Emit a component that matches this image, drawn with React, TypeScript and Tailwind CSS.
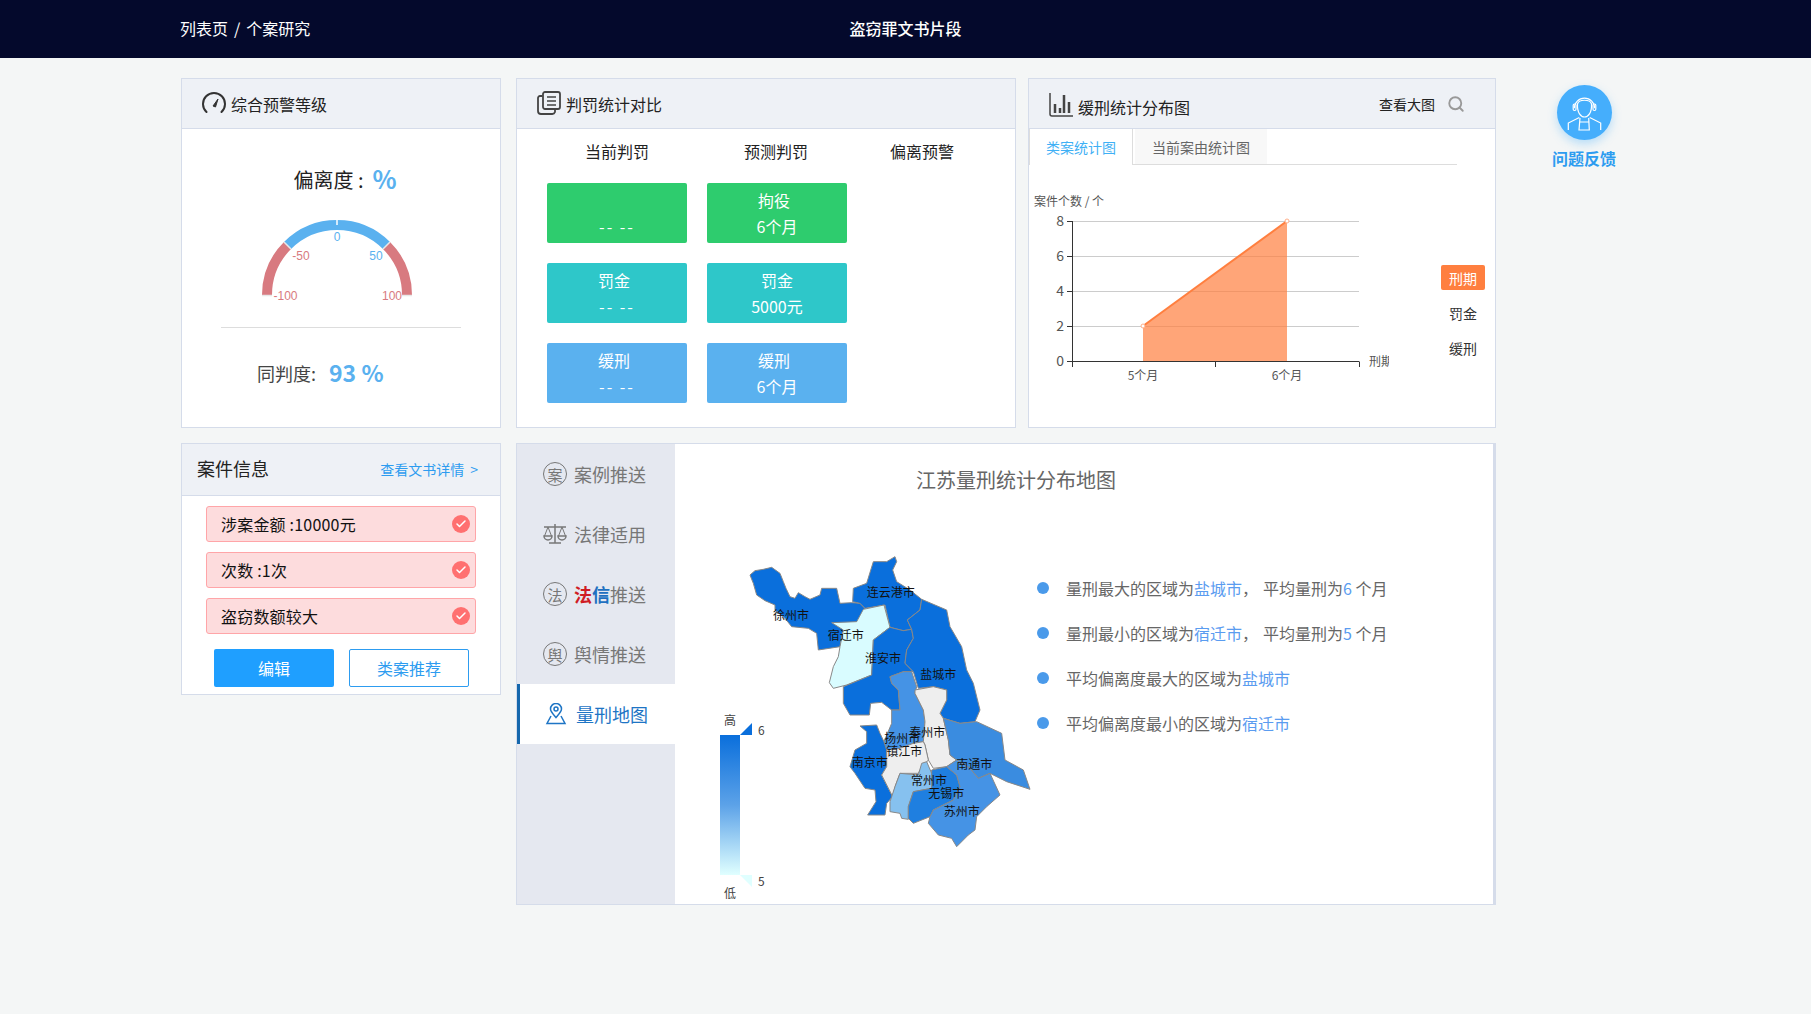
import { Check, Search } from "lucide-react";

const regions = [
  { name: "徐州市", fill: "#0a6fdc", x: 273, y: 225, points: "150,105 165,92 190,88 215,82 240,100 250,125 258,145 270,170 285,175 295,158 315,170 330,178 360,165 365,145 410,145 420,190 455,188 480,190 495,205 480,240 455,260 430,270 420,320 355,330 350,280 325,265 275,260 255,235 225,210 225,195 195,182 170,165 160,130" },
  { name: "连云港市", fill: "#0a6fdc", x: 572, y: 158, points: "458,185 460,145 500,130 520,65 560,65 585,50 590,65 578,90 590,125 630,150 665,178 660,210 622,240 635,268 610,272 570,262 555,195 495,205 480,190" },
  { name: "宿迁市", fill: "#d9fcff", x: 437, y: 285, points: "395,248 470,245 490,208 552,195 570,262 520,300 515,405 440,435 400,445 388,428 400,380 415,350 420,320 430,270" },
  { name: "淮安市", fill: "#0a6fdc", x: 549, y: 355, points: "570,262 610,272 635,268 640,295 620,330 615,370 640,395 610,395 570,410 575,430 595,450 600,510 575,510 545,487 512,490 508,525 450,525 430,490 430,440 515,405 520,300" },
  { name: "盐城市", fill: "#0a6fdc", x: 715, y: 402, points: "665,178 740,210 750,260 785,320 800,390 820,430 840,510 825,545 780,550 730,535 720,520 740,480 740,450 700,440 655,445 640,395 615,370 620,330 640,295 635,268 622,240 660,210" },
  { name: "扬州市", fill: "#4593e5", x: 607, y: 596, points: "570,410 610,395 635,395 650,440 645,460 670,510 675,545 670,605 640,610 600,625 560,630 552,605 575,550 575,510 600,510 595,450 575,430" },
  { name: "泰州市", fill: "#eeeeee", x: 682, y: 577, points: "645,450 700,440 740,450 740,480 720,520 730,535 745,600 750,645 770,660 740,680 700,685 685,660 675,615 670,605 675,545 670,510 645,460" },
  { name: "南通市", fill: "#3a8ce0", x: 823, y: 674, points: "730,535 780,550 830,545 905,580 915,660 970,690 990,748 920,725 870,700 835,715 810,685 770,660 750,645 745,600" },
  { name: "南京市", fill: "#0a6fdc", x: 509, y: 668, points: "480,558 530,555 540,580 552,605 560,630 560,680 545,705 578,770 560,790 555,825 503,825 528,785 525,750 495,745 465,700 450,680 465,630 500,610 500,575" },
  { name: "镇江市", fill: "#eeeeee", x: 613, y: 633, points: "560,630 600,625 640,610 670,605 675,615 685,660 660,690 655,700 600,700 585,740 578,770 545,705 560,680" },
  { name: "常州市", fill: "#86c1ef", x: 687, y: 720, points: "600,700 655,705 665,670 680,665 695,700 695,745 640,755 625,800 625,838 605,835 600,820 570,815 570,785 585,740" },
  { name: "无锡市", fill: "#1f7fe0", x: 739, y: 761, points: "695,690 740,680 770,705 780,740 760,780 700,810 690,830 640,850 625,835 625,800 640,755 695,745" },
  { name: "苏州市", fill: "#4593e5", x: 785, y: 815, points: "770,660 810,685 835,715 870,700 900,765 860,800 830,830 825,870 805,885 770,920 755,895 715,885 685,850 690,830 700,810 760,780 780,740 770,705 740,680" },
];

const tiles = [
  { color: "bg-[#2ecc6e]", left: ["", "-- --"], right: ["拘役", "6个月"], shift: true },
  { color: "bg-[#2ec7c9]", left: ["罚金", "-- --"], right: ["罚金", "5000元"], shift: false },
  { color: "bg-[#5ab1ef]", left: ["缓刑", "-- --"], right: ["缓刑", "6个月"], shift: true },
];

function CardHeader({ icon, title }: { icon: React.ReactNode; title: string }) {
  return (
    <div className="flex items-center h-[50px] bg-[#eef1f6] border-b border-[#d5dcea]">
      {icon}
      <span className="text-base leading-6 text-[#222]">{title}</span>
    </div>
  );
}

function Tile({ color, lines, shift }: { color: string; lines: string[]; shift: boolean }) {
  return (
    <div className={"h-[60px] rounded-[2px] pt-1 text-center text-base leading-[26px] text-white " + color}>
      <div className={"h-[26px] " + (shift ? "pr-[6px]" : "")}>{lines[0]}</div>
      <div className={lines[1] === "-- --" ? "tracking-[2px]" : ""}>{lines[1]}</div>
    </div>
  );
}

function Gauge() {
  return (
    <svg width="170" height="90" viewBox="252 218 170 90" className="mt-[18px] -ml-[8px]">
      <g fill="none" strokeWidth="10">
        <path d="M267 295 A70 70 0 0 1 287.5 245.5" stroke="#d87a80" />
        <path d="M287.5 245.5 A70 70 0 0 1 386.5 245.5" stroke="#5ab1ef" />
        <path d="M386.5 245.5 A70 70 0 0 1 407 295" stroke="#d87a80" />
      </g>
      <path d="M337 220 V225" stroke="#fff" strokeWidth="1.5" />
      <path d="M284 242 L291 249 M390 242 L383 249 M262 295.500 H272 M402 295.500 H412" stroke="#e8e8e8" strokeWidth="1.5" />
      <g fontSize="12" textAnchor="middle" dominantBaseline="central" fontFamily="'Liberation Sans', sans-serif">
        <text x="337" y="236.500" fill="#5ab1ef">0</text>
        <text x="376" y="256" fill="#5ab1ef">50</text>
        <text x="301" y="256" fill="#d87a80">-50</text>
        <text x="285.500" y="296" fill="#d87a80">-100</text>
        <text x="392" y="296" fill="#d87a80">100</text>
      </g>
    </svg>
  );
}

function TrendChart() {
  const gridY = [326, 291, 256, 221];
  return (
    <svg width="360" height="262" viewBox="1029 165 360 262" className="shrink-0">
      <g stroke="#ccc">
        {gridY.map((y) => (
          <path key={y} d={`M1072 ${y + 0.5} H1359`} />
        ))}
      </g>
      <polygon points="1143,326 1287,221 1287,362 1143,362" fill="#ff7f3f" fillOpacity="0.7" />
      <path d="M1143 326 L1287 221" stroke="#ff7f3f" strokeWidth="2" />
      <circle cx="1143" cy="326" r="2" fill="#fff" stroke="#ffb08a" />
      <circle cx="1287" cy="221" r="2" fill="#fff" stroke="#ffb08a" />
      <path d="M1072.500 221 V362 M1067 221.500 H1072 M1067 256.500 H1072 M1067 291.500 H1072 M1067 326.500 H1072 M1067 361.500 H1359.500 M1072.500 362 V367 M1215.500 362 V367 M1359.500 362 V367" stroke="#333" fill="none" />
      <g fontSize="12" fill="#555" dominantBaseline="central">
        <text x="1034" y="200">案件个数 / 个</text>
        <g textAnchor="end" fontSize="14">
          <text x="1064" y="220">8</text>
          <text x="1064" y="255">6</text>
          <text x="1064" y="290">4</text>
          <text x="1064" y="325">2</text>
          <text x="1064" y="360">0</text>
        </g>
        <text x="1143" y="374" textAnchor="middle">5个月</text>
        <text x="1287" y="374" textAnchor="middle">6个月</text>
        <text x="1369" y="360">刑期</text>
      </g>
    </svg>
  );
}

function JiangsuMap() {
  return (
    <svg width="332" height="364" viewBox="700 540 332 364" className="shrink-0">
      <defs>
        <linearGradient id="legendFill" x1="0" y1="0" x2="0" y2="1">
          <stop offset="0" stopColor="#0a6fdc" />
          <stop offset="0.5" stopColor="#5ca2e8" />
          <stop offset="1" stopColor="#e0ffff" />
        </linearGradient>
      </defs>
      <rect x="720" y="735" width="20" height="140" fill="url(#legendFill)" />
      <polygon points="740,735 752,735 752,723" fill="#0a6fdc" />
      <polygon points="740,875 752,875 752,887" fill="#e0ffff" />
      <g fontSize="12" fill="#444" dominantBaseline="central">
        <text x="730" y="719" textAnchor="middle">高</text>
        <text x="730" y="892" textAnchor="middle">低</text>
        <text x="758" y="729">6</text>
        <text x="758" y="880">5</text>
      </g>
      <g transform="translate(700 540) scale(0.33333)">
        {regions.map((r) => (
          <polygon key={r.name} points={r.points} fill={r.fill} stroke="#888" strokeWidth="3" strokeLinejoin="round" />
        ))}
        {regions.map((r) => (
          <text key={r.name} x={r.x} y={r.y - 2} fontSize="36" fill="#111" textAnchor="middle" dominantBaseline="central">
            {r.name}
          </text>
        ))}
      </g>
    </svg>
  );
}

function CircleGlyph({ char }: { char: string }) {
  return (
    <span className="flex items-center justify-center w-6 h-6 rounded-full border-[1.500px] border-[#777] text-[15px] leading-none text-[#777]">
      {char}
    </span>
  );
}

function ScaleIcon() {
  return (
    <svg width="24" height="24" viewBox="0 0 24 24" fill="none" stroke="#777" strokeWidth="1.500">
      <path d="M1 5 H23 M12 2 V21 M6 21 H18" />
      <path d="M5 5 L1.500 14 M5 5 L8.500 14 M19 5 L15.500 14 M19 5 L22.500 14" strokeWidth="1" />
      <path d="M1 14 H9 A4 4 0 0 1 1 14 Z M15 14 H23 A4 4 0 0 1 15 14 Z" />
    </svg>
  );
}

function PinIcon() {
  return (
    <svg width="22" height="22" viewBox="0 0 22 22" fill="none" stroke="#1e75c5" strokeWidth="1.500">
      <path d="M11 14.500 C8 11 5.500 8.500 5.500 6 A5.500 5.500 0 0 1 16.500 6 C16.500 8.500 14 11 11 14.500 Z" />
      <circle cx="11" cy="6" r="2" />
      <path d="M6 13 L2 20.500 H20 L16 13" />
    </svg>
  );
}

const navItems = [
  { label: <>案例推送</>, icon: <CircleGlyph char="案" /> },
  { label: <>法律适用</>, icon: <ScaleIcon /> },
  {
    label: (
      <>
        <b className="text-[#d01c24]">法</b>
        <b className="text-[#2070c0]">信</b>推送
      </>
    ),
    icon: <CircleGlyph char="法" />,
  },
  { label: <>舆情推送</>, icon: <CircleGlyph char="舆" /> },
];

const flags = ["涉案金额 :10000元", "次数 :1次", "盗窃数额较大"];

function Blue({ children }: { children: React.ReactNode }) {
  return <span className="text-[#5a9cf0]">{children}</span>;
}

const notes = [
  <>量刑最大的区域为<Blue>盐城市</Blue>，<span className="ml-[5px]">平均量刑为</span><Blue>6</Blue> 个月</>,
  <>量刑最小的区域为<Blue>宿迁市</Blue>，<span className="ml-[5px]">平均量刑为</span><Blue>5</Blue> 个月</>,
  <>平均偏离度最大的区域为<Blue>盐城市</Blue></>,
  <>平均偏离度最小的区域为<Blue>宿迁市</Blue></>,
];

export default function App() {
  return (
    <div className="w-full min-h-[1014px] bg-[#f4f6f6] font-['Noto_Sans_CJK_SC',sans-serif]">
      <div className="grid grid-cols-3 items-center h-[58px] pb-[2px] px-[180px] bg-[#04092c] text-white text-base">
        <div>列表页<span className="mx-[6px]">/</span>个案研究</div>
        <div className="text-center font-medium">盗窃罪文书片段</div>
      </div>

      <div className="flex pl-[181px] pt-5">
        <div className="w-[1315px] flex flex-col gap-[15px]">
          <div className="flex h-[350px]">
            <div className="w-[320px] flex flex-col bg-white border border-[#d5dcea]">
              <CardHeader
                title="综合预警等级"
                icon={
                  <svg width="24" height="24" viewBox="0 0 24 24" fill="none" stroke="#333" strokeWidth="2" className="ml-5 mr-[5px] -mt-[2px]">
                    <path d="M4.500 21 A11 11 0 1 1 19.500 21" strokeLinecap="round" />
                    <path d="M11 15 L16 8 L13.500 16 Z" fill="#333" strokeWidth="1" />
                  </svg>
                }
              />
              <div className="flex flex-col items-center pt-[31px]">
                <div className="flex items-center justify-center h-10 pl-2">
                  <span className="text-xl text-[#222]">偏离度 :</span>
                  <span className="ml-[9px] mb-[3px] text-[25px] font-semibold text-[#5ab1ef]">%</span>
                </div>
                <Gauge />
                <div className="mt-[19px] w-60 h-px bg-[#ddd]" />
                <div className="flex items-center self-start ml-[75px] mt-[25px] h-10">
                  <span className="text-lg text-[#444]">同判度:</span>
                  <span className="ml-[13px] mb-[2px] text-[23px] font-bold text-[#5ab1ef]">93 %</span>
                </div>
              </div>
            </div>

            <div className="w-[500px] ml-[15px] flex flex-col bg-white border border-[#d5dcea]">
              <CardHeader
                title="判罚统计对比"
                icon={
                  <svg width="24" height="24" viewBox="0 0 24 24" fill="none" stroke="#444" strokeWidth="1.800" className="ml-5 mr-[5px] -mt-[2px]">
                    <rect x="6" y="1" width="17" height="17" rx="2" />
                    <path d="M5.500 5 H3 A2 2 0 0 0 1 7 V20 A3 3 0 0 0 4 23 H15 A3 3 0 0 0 18 21 V18.500" />
                    <path d="M10 6 H19 M10 10 H19 M10 14 H19" strokeWidth="1.300" />
                  </svg>
                }
              />
              <div className="pl-[30px]">
                <div className="flex h-[44px] items-center text-center text-base text-[#222]">
                  <div className="w-[140px]">当前判罚</div>
                  <div className="w-[140px] ml-[19px]">预测判罚</div>
                  <div className="w-[152px]">偏离预警</div>
                </div>
                <div className="grid grid-cols-[140px_140px] gap-5 mt-[10px]">
                  {tiles.map((t) => (
                    <div key={t.color} className="contents">
                      <Tile color={t.color} lines={t.left} shift={t.left[0] !== ""} />
                      <Tile color={t.color} lines={t.right} shift={t.shift} />
                    </div>
                  ))}
                </div>
              </div>
            </div>

            <div className="w-[468px] ml-3 flex flex-col bg-white border border-[#d5dcea]">
              <div className="flex items-center h-[50px] bg-[#eef1f6] border-b border-[#d5dcea]">
                <svg width="24" height="24" viewBox="0 0 24 24" fill="none" stroke="#444" className="ml-5 mr-[5px] mt-[3px]">
                  <path d="M1 0 V21 A2 2 0 0 0 3 23 H24" strokeWidth="1.500" />
                  <path d="M6 11 V20 M11 15 V20 M15 2 V20 M20 9 V20" strokeWidth="2.500" />
                </svg>
                <span className="text-base leading-6 text-[#222] pt-[7px]">缓刑统计分布图</span>
                <span className="ml-[189px] text-sm text-[#222]">查看大图</span>
                <Search className="ml-3 w-[18px] h-[18px] text-[#999]" strokeWidth={2.500} />
              </div>
              <div className="flex h-9 mr-[38px] border-b border-[#ddd]">
                <div className="w-[104px] -mb-px flex items-center justify-center bg-white border-r border-l border-[#ddd] text-sm text-[#3fb0f5]">
                  类案统计图
                </div>
                <div className="w-[132px] ml-[2px] flex items-center justify-center bg-[#f8f8f8] text-sm text-[#666]">
                  当前案由统计图
                </div>
              </div>
              <div className="flex">
                <TrendChart />
                <div className="ml-[52px] pt-[95px] flex flex-col text-sm text-[#333]">
                  <div className="h-[35px] flex items-center">
                    <div className="w-11 h-[25px] flex items-center justify-center rounded-[2px] bg-[#ff7f3f] text-white">刑期</div>
                  </div>
                  <div className="h-[35px] flex items-center justify-center">罚金</div>
                  <div className="h-[35px] flex items-center justify-center">缓刑</div>
                </div>
              </div>
            </div>
          </div>

          <div className="flex items-start">
            <div className="w-[320px] h-[252px] flex flex-col bg-white border border-[#d5dcea]">
              <div className="flex items-center justify-between h-[52px] pb-[3px] pl-[15px] pr-[22px] bg-[#eef1f6] border-b border-[#d5dcea]">
                <span className="text-lg text-[#222]">案件信息</span>
                <span className="mt-[2px] text-sm text-[#2d9cf0]">查看文书详情<span className="ml-[6px]">&gt;</span></span>
              </div>
              <div className="flex flex-col gap-[10px] pl-6 pr-6 pt-[10px]">
                {flags.map((f) => (
                  <div key={f} className="flex items-center justify-between h-9 pl-[14px] pr-[5px] rounded-[3px] bg-[#fddcdd] border border-[#ffa5a8] text-base tracking-[0.2px] text-[#111]">
                    <span className="-mt-px">{f}</span>
                    <span className="flex items-center justify-center w-[18px] h-[18px] rounded-full bg-[#ff7070]">
                      <Check className="w-3 h-3 text-white" strokeWidth={3} />
                    </span>
                  </div>
                ))}
              </div>
              <div className="flex gap-[15px] pl-8 pt-[15px]">
                <div className="flex items-center justify-center w-[120px] h-[38px] rounded-[2px] bg-[#1f9fff] text-base text-white">编辑</div>
                <div className="flex items-center justify-center w-[120px] h-[38px] rounded-[2px] bg-white border border-[#2d9cf0] text-base text-[#2d9cf0]">类案推荐</div>
              </div>
            </div>

            <div className="w-[980px] h-[462px] ml-[15px] flex bg-white border-t border-l border-b border-r-[3px] border-[#d5dcea]">
              <div className="w-[158px] shrink-0 bg-[#e5e8f0]">
                {navItems.map((item, i) => (
                  <div key={i} className="flex items-center gap-[7px] h-[60px] pl-[26px] text-lg text-[#777]">
                    {item.icon}
                    <span className="-mt-px">{item.label}</span>
                  </div>
                ))}
                <div className="flex items-center gap-[9px] h-[60px] pl-[25px] bg-white border-l-[3px] border-[#1568ad] text-lg text-[#1e75c5]">
                  <PinIcon />
                  <span className="-mt-px">量刑地图</span>
                </div>
              </div>
              <div className="flex-1">
                <div className="pl-[241px] pt-[22px] text-xl leading-7 text-[#666]">江苏量刑统计分布地图</div>
                <div className="flex mt-[46px] ml-[25px]">
                  <JiangsuMap />
                  <div className="ml-[5px] mt-[25px]">
                    {notes.map((n, i) => (
                      <div key={i} className="flex items-center h-[45px] text-base text-[#666]">
                        <span className="w-3 h-3 mr-[17px] rounded-full bg-[#4a9aea]" />
                        <span className="whitespace-pre-wrap">{n}</span>
                      </div>
                    ))}
                  </div>
                </div>
              </div>
            </div>
          </div>
        </div>

        <div className="flex flex-col items-center w-[64px] ml-14 pt-[7px]">
          <div className="w-[55px] h-[55px] rounded-full bg-[#45aefc] shadow-[0_4px_10px_rgba(69,174,252,0.35)]">
            <svg width="55" height="55" viewBox="0 0 55 55" fill="none" stroke="#fff" strokeWidth="1.200">
              <path d="M17.300 23.300 A10.200 10.200 0 0 1 37.700 23.300" />
              <rect x="16.200" y="19" width="2.800" height="6.500" rx="1.200" />
              <rect x="36" y="19" width="2.800" height="6.500" rx="1.200" />
              <path d="M20.500 19 C20 28 24 32 27.500 32 C31 32 35 28 34.500 19 C33 14 22 14 20.500 19 Z" />
              <path d="M11.300 45 V38 L22.300 32.500 M43.700 45 V38 L32.700 32.500" />
              <path d="M23 33 L22 45 H32.300 L31.700 33 M23 37 H31.700" />
            </svg>
          </div>
          <div className="mt-[6px] text-base font-semibold text-[#2d9cf0] whitespace-nowrap">问题反馈</div>
        </div>
      </div>
    </div>
  );
}
